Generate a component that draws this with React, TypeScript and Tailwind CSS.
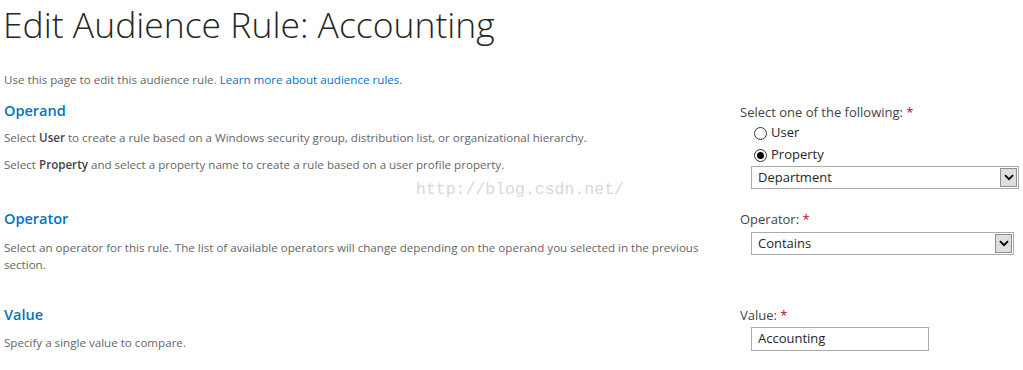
import React from "react";

const F = { fontFamily: '"Open Sans", "Noto Sans", Arial, sans-serif' };

function Chevron() {
  return (
    <svg width="10" height="7" viewBox="0 0 10 7">
      <path d="M1 1.2 L5 5.2 L9 1.2" fill="none" stroke="#000" strokeWidth="1.8" />
    </svg>
  );
}

function SelectBox({ value, width }: { value: string; width: string }) {
  return (
    <div className={`flex h-[23px] items-stretch border border-[#ababab] bg-white ${width}`}>
      <div className="flex flex-1 items-center pl-[6px] text-[13px] text-[#262626]">{value}</div>
      <div className="m-[1px] flex w-[17px] items-center justify-center border border-[#8f8f8f] bg-[#dedede]">
        <Chevron />
      </div>
    </div>
  );
}

function Radio({ checked, label }: { checked?: boolean; label: string }) {
  return (
    <div className="flex h-[22px] items-center gap-[4px] pl-[14px] text-[13px] text-[#262626]">
      <span className="flex h-[13px] w-[13px] items-center justify-center rounded-full border border-[#333]">
        {checked && <span className="h-[7px] w-[7px] rounded-full bg-black" />}
      </span>
      <span>{label}</span>
    </div>
  );
}

function Label({ text }: { text: string }) {
  return (
    <div className="text-[13px] leading-[19px] text-[#444]">
      {text} <span className="text-[#bf0000]">*</span>
    </div>
  );
}

export default function App() {
  return (
    <div className="relative h-[370px] w-[1023px] overflow-hidden bg-white" style={F}>
      <h1 className="pl-[3px] text-[35.5px] font-light leading-[48px] text-[#262626]">
        Edit Audience Rule: Accounting
      </h1>
      <p className="mt-[25px] pl-[4px] text-[11.6px] leading-[14px] text-[#666]">
        Use this page to edit this audience rule.{" "}
        <span className="text-[#0072c6]">Learn more about audience rules.</span>
      </p>

      <div className="mt-[14px] grid grid-cols-[740px_1fr]">
        {/* Operand */}
        <div className="pl-[4px]">
          <div className="text-[14.5px] font-semibold leading-[20px] text-[#0072c6]">Operand</div>
          <p className="mt-[10px] text-[11.6px] leading-[14px] text-[#666]">
            Select <b className="font-semibold text-[#444]">User</b> to create a rule based on a Windows security group,
            distribution list, or organizational hierarchy.
          </p>
          <p className="mt-[13px] text-[11.6px] leading-[14px] text-[#666]">
            Select <b className="font-semibold text-[#444]">Property</b> and select a property name to create a rule based
            on a user profile property.
          </p>
        </div>
        <div className="pt-[2px]">
          <Label text="Select one of the following:" />
          <div>
            <Radio label="User" />
            <Radio checked label="Property" />
          </div>
          <div className="pl-[11px]">
            <SelectBox value="Department" width="w-[268px]" />
          </div>
        </div>

        {/* Operator */}
        <div className="mt-[20px] pl-[4px]">
          <div className="text-[14.5px] font-semibold leading-[20px] text-[#0072c6]">Operator</div>
          <p className="mt-[10px] w-[705px] text-[11.6px] leading-[17px] text-[#666]">
            Select an operator for this rule. The list of available operators will change depending on the operand you
            selected in the previous section.
          </p>
        </div>
        <div className="mt-[21px]">
          <Label text="Operator:" />
          <div className="mt-[3px] pl-[11px]">
            <SelectBox value="Contains" width="w-[263px]" />
          </div>
        </div>

        {/* Value */}
        <div className="mt-[32px] pl-[4px]">
          <div className="text-[14.5px] font-semibold leading-[20px] text-[#0072c6]">Value</div>
          <p className="mt-[11px] text-[11.6px] leading-[14px] text-[#666]">Specify a single value to compare.</p>
        </div>
        <div className="mt-[33px]">
          <Label text="Value:" />
          <div className="mt-[2px] pl-[11px]">
            <div className="flex h-[24px] w-[178px] items-center border border-[#ababab] pl-[6px] text-[13px] text-[#262626]">
              Accounting
            </div>
          </div>
        </div>
      </div>

      <div
        className="pointer-events-none absolute left-[416px] top-[178px] text-[16.5px] text-[#d8d8d8]"
        style={{ fontFamily: '"Liberation Mono", "DejaVu Sans Mono", monospace' }}
      >
        http://blog.csdn.net/
      </div>
    </div>
  );
}
